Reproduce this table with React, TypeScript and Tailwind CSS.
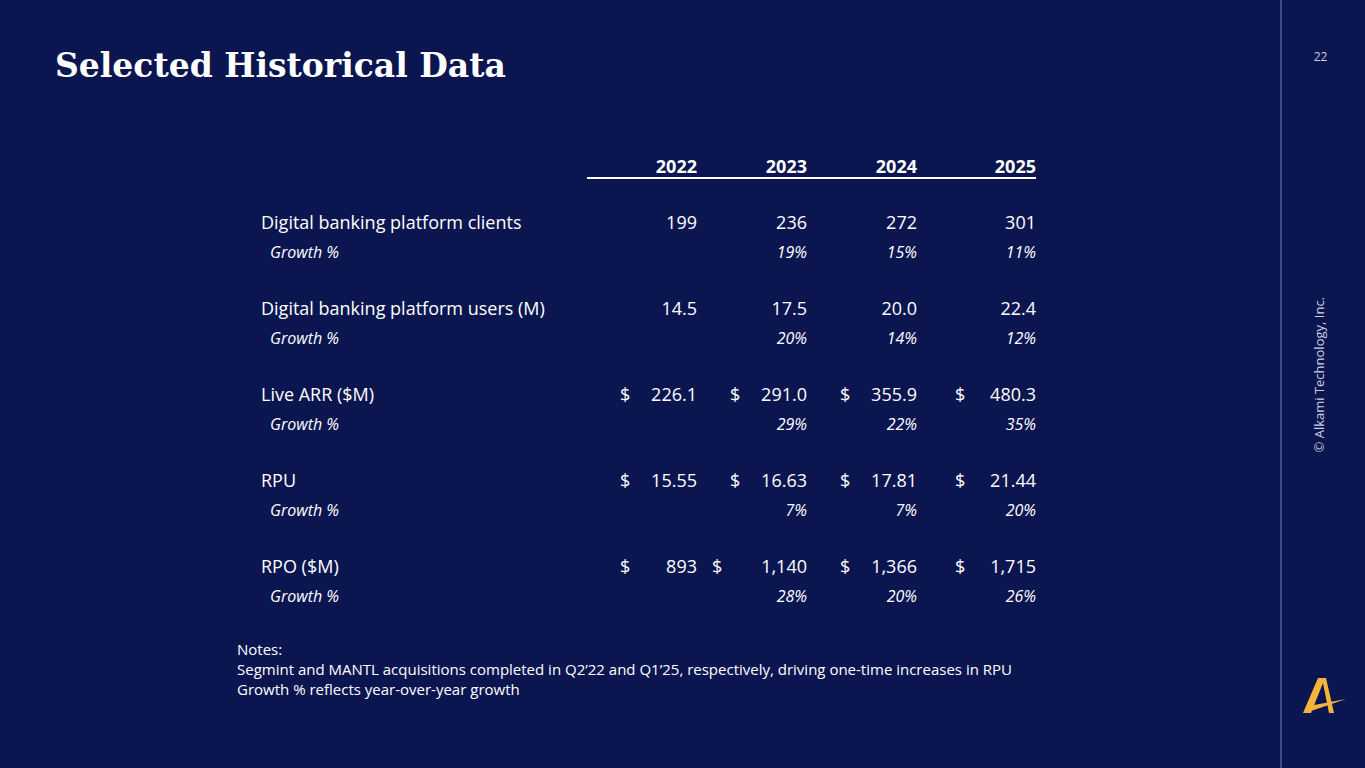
import React from "react";

type Cell = { d?: number; v: string };
type Group = { label: string; cells: Cell[]; growth: string[] };

const groups: Group[] = [
  { label: "Digital banking platform clients", cells: [{ v: "199" }, { v: "236" }, { v: "272" }, { v: "301" }], growth: ["", "19%", "15%", "11%"] },
  { label: "Digital banking platform users (M)", cells: [{ v: "14.5" }, { v: "17.5" }, { v: "20.0" }, { v: "22.4" }], growth: ["", "20%", "14%", "12%"] },
  { label: "Live ARR ($M)", cells: [{ d: 33, v: "226.1" }, { d: 33, v: "291.0" }, { d: 33, v: "355.9" }, { d: 38, v: "480.3" }], growth: ["", "29%", "22%", "35%"] },
  { label: "RPU", cells: [{ d: 33, v: "15.55" }, { d: 33, v: "16.63" }, { d: 33, v: "17.81" }, { d: 38, v: "21.44" }], growth: ["", "7%", "7%", "20%"] },
  { label: "RPO ($M)", cells: [{ d: 33, v: "893" }, { d: 15, v: "1,140" }, { d: 33, v: "1,366" }, { d: 38, v: "1,715" }], growth: ["", "28%", "20%", "26%"] },
];

const colW = ["w-[110px]", "w-[110px]", "w-[110px]", "w-[119px]"];

function Logo() {
  return (
    <svg width="48" height="44" viewBox="0 0 48 44">
      <polygon points="19,2 26,2 12,37 4,37" fill="#f2b43a" />
      <polygon points="23,2 27,2 35,37 30,37" fill="#f2b43a" />
      <polygon points="10,30 47,23 12,35" fill="#f2b43a" />
    </svg>
  );
}

export default function App() {
  const font = { fontFamily: '"Open Sans", "Liberation Sans", sans-serif' };
  return (
    <div className="w-[1365px] h-[768px] bg-[#0b1650] flex text-white overflow-hidden" style={font}>
      <div className="w-[1280px] shrink-0 h-full flex flex-col">
        <h1
          className="pl-[55px] pt-[46px] text-[33px] leading-[40px] font-bold text-white"
          style={{ fontFamily: '"DejaVu Serif", "Liberation Serif", serif' }}
        >
          Selected Historical Data
        </h1>
        <div className="pl-[261px] pt-[66px] flex flex-col">
          <div className="flex">
            <div className="w-[326px]" />
            <div className="flex border-b-2 border-white h-[27px] items-start">
              {["2022", "2023", "2024", "2025"].map((y, i) => (
                <div key={y} className={`${colW[i]} text-right text-[18px] leading-[28px] font-bold`}>
                  {y}
                </div>
              ))}
            </div>
          </div>
          {groups.map((g, gi) => (
            <div key={g.label} className={`flex flex-col ${gi === 0 ? "mt-[28px]" : "mt-[26px]"}`}>
              <div className="flex h-[30px] items-center text-[18px]">
                <div className="w-[326px]">{g.label}</div>
                {g.cells.map((c, i) => (
                  <div key={i} className={`${colW[i]} flex items-center justify-between`}>
                    <span style={{ paddingLeft: c.d ?? 0 }}>{c.d ? "$" : ""}</span>
                    <span>{c.v}</span>
                  </div>
                ))}
              </div>
              <div className="flex h-[30px] items-center text-[16px] italic">
                <div className="w-[326px] pl-[9px]">Growth %</div>
                {g.growth.map((v, i) => (
                  <div key={i} className={`${colW[i]} text-right`}>
                    {v}
                  </div>
                ))}
              </div>
            </div>
          ))}
        </div>
        <div className="pl-[237px] pt-[28px] text-[15px] leading-[20px]">
          <div>Notes:</div>
          <div>Segmint and MANTL acquisitions completed in Q2’22 and Q1’25, respectively, driving one-time increases in RPU</div>
          <div>Growth % reflects year-over-year growth</div>
        </div>
      </div>
      <div className="w-[2px] shrink-0 h-full bg-[#3d4a88]" />
      <div className="w-[83px] shrink-0 h-full flex flex-col items-center relative">
        <div className="pt-[49px] text-[12px] text-[#c9cfe3] leading-[16px] pr-[6px]">22</div>
        <div className="absolute left-[38px] top-[375px] w-0 h-0 flex items-center justify-center">
          <div className="-rotate-90 whitespace-nowrap text-[13px] text-[#c9cfe3]">© Alkami Technology, Inc.</div>
        </div>
        <div className="mt-auto pb-[48px] pr-[2px]">
          <Logo />
        </div>
      </div>
    </div>
  );
}
